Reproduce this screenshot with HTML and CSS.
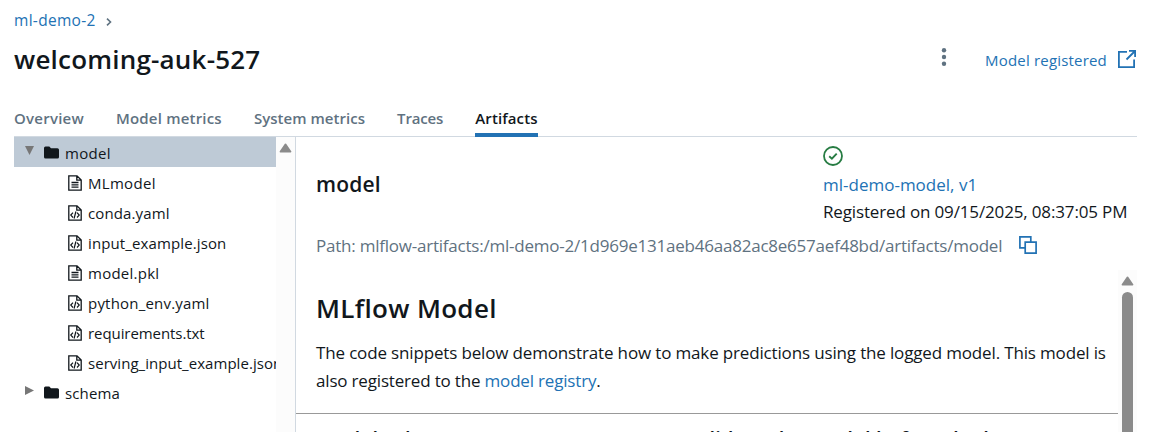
FILE: index.html
```html
<!DOCTYPE html>
<html lang="en">
<head>
<meta charset="utf-8">
<title>welcoming-auk-527</title>
<link rel="stylesheet" href="styles.css">
</head>
<body>
<svg class="sprite" aria-hidden="true">
  <symbol id="folder" viewBox="0 0 15 13"><path d="M0 2Q0 .5 1.5.5H5.3L7 2.3H13.4Q15 2.3 15 3.8V11Q15 12.5 13.5 12.5H1.5Q0 12.5 0 11Z" fill="currentColor"/></symbol>
  <symbol id="file" viewBox="0 0 14 16"><path d="M.8.8H9L13.2 5V15.2H.8ZM8.8.8V5.2H13.2M3.5 7.5H10.5M3.5 9.8H10.5M3.5 12.1H10.5" fill="none" stroke="currentColor" stroke-width="1.3"/></symbol>
  <symbol id="code" viewBox="0 0 14 16"><path d="M.8.8H9L13.2 5V15.2H.8ZM8.8.8V5.2H13.2" fill="none" stroke="currentColor" stroke-width="1.3"/><path d="M5 7.7L2.8 10.1L5 12.5M9 7.7L11.2 10.1L9 12.5M7.9 6.5L6.1 13.5" fill="none" stroke="currentColor" stroke-width="1.2"/></symbol>
</svg>
<div class="page">
  <nav class="crumbs"><a class="t-crumb">ml-demo-2</a><svg width="6" height="8" viewBox="0 0 6 8"><path d="M1 .6L4.5 4L1 7.4" fill="none" stroke="#5f7281" stroke-width="1.6"/></svg></nav>
  <header class="header">
    <h1 class="title">welcoming-auk-527</h1>
    <div class="actions">
      <svg class="dots" width="6" height="18" viewBox="0 0 6 18"><g fill="#5f7281"><circle cx="3" cy="2.3" r="2.2"/><circle cx="3" cy="9" r="2.2"/><circle cx="3" cy="15.7" r="2.2"/></g></svg>
      <a class="registered">Model registered</a>
      <svg class="external" width="19" height="19" viewBox="0 0 19 19"><path d="M9 1.9H.9V17.1H16.1V9.5M11 .9H17.1V7M17 1L8.5 9.5" fill="none" stroke="#2272b4" stroke-width="1.8"/></svg>
    </div>
  </header>
  <div class="tabs">
    <a class="tab overview">Overview</a><a class="tab metrics">Model metrics</a><a class="tab system">System metrics</a><a class="tab traces">Traces</a><a class="tab active">Artifacts</a>
  </div>
  <main class="main">
    <aside class="side">
      <div class="tree">
        <div class="row selected"><svg class="arrow" width="10" height="9"><path d="M0 0H9L4.5 9Z" fill="#777"/></svg><svg class="folder"><use href="#folder"/></svg><span class="n-model">model</span></div>
        <div class="row child"><svg class="icon"><use href="#file"/></svg><span class="n-ml">MLmodel</span></div>
        <div class="row child"><svg class="icon"><use href="#code"/></svg><span class="n-conda">conda.yaml</span></div>
        <div class="row child"><svg class="icon"><use href="#code"/></svg><span class="n-input">input_example.json</span></div>
        <div class="row child"><svg class="icon"><use href="#file"/></svg><span class="n-pkl">model.pkl</span></div>
        <div class="row child"><svg class="icon"><use href="#code"/></svg><span class="n-env">python_env.yaml</span></div>
        <div class="row child"><svg class="icon"><use href="#code"/></svg><span class="n-req">requirements.txt</span></div>
        <div class="row child"><svg class="icon"><use href="#code"/></svg><span class="n-serv">serving_input_example.json</span></div>
        <div class="row"><svg class="arrow" width="10" height="9"><path d="M0 0L9 4.5L0 9Z" fill="#777"/></svg><svg class="folder"><use href="#folder"/></svg><span class="n-schema">schema</span></div>
      </div>
      <div class="scroll"><svg width="13" height="10" viewBox="0 0 13 10"><path d="M6.5 1.3L11.6 8.7H1.4Z" fill="#8b8b8b" stroke="#8b8b8b" stroke-width="1.6" stroke-linejoin="round"/></svg></div>
    </aside>
    <section class="detail">
      <div class="info">
        <h2 class="name">model</h2>
        <div class="version">
          <svg width="20" height="20" viewBox="0 0 20 20"><circle cx="10" cy="10" r="9" fill="none" stroke="#277c43" stroke-width="1.8"/><path d="M6.2 10.2L8.9 12.6L13.7 7.6" fill="none" stroke="#277c43" stroke-width="1.9"/></svg>
          <a class="v-link">ml-demo-model, v1</a>
          <span class="v-date">Registered on 09/15/2025, 08:37:05 PM</span>
        </div>
      </div>
      <div class="pathrow"><span class="path">Path: mlflow-artifacts:/ml-demo-2/1d969e131aeb46aa82ac8e657aef48bd/artifacts/model</span><svg width="18" height="18" viewBox="0 0 18 18"><path d="M5.5 11.8H.9V.9H11.8V5.5M6.2 6.2H17.1V17.1H6.2Z" fill="none" stroke="#2272b4" stroke-width="1.7"/></svg></div>
      <div class="viewer">
        <div class="content">
          <h2 class="mlflow">MLflow Model</h2>
          <p class="copy"><span class="c1">The code snippets below demonstrate how to make predictions using the logged model. This model is</span><br><span class="c2">also registered to the <a>model registry</a>.</span></p>
          <div class="columns"><h3 class="col-a">Model schema</h3><h3 class="col-b">Validate the model before deployment</h3></div>
        </div>
        <div class="scroll"><svg width="13" height="10" viewBox="0 0 13 10"><path d="M6.5 1.3L11.6 8.7H1.4Z" fill="#8b8b8b" stroke="#8b8b8b" stroke-width="1.6" stroke-linejoin="round"/></svg><div class="thumb"></div></div>
      </div>
    </section>
  </main>
</div>
</body>
</html>
```
FILE: styles.css
```css
* { box-sizing: border-box; }
body { margin: 0; width: 1150px; height: 432px; overflow: hidden; background: #fff; color: #11171c; font-family: "Open Sans", "Noto Sans", sans-serif; }
h1, h2, h3, p { margin: 0; font-weight: 600; }
span, a, h1, h2, h3 { white-space: nowrap; }
a { color: #2272b4; }
svg { flex: none; }
.sprite { position: absolute; width: 0; height: 0; }
.page { height: 432px; padding: 0 13px 0 14px; display: flex; flex-direction: column; }
.crumbs { height: 40px; display: flex; align-items: center; gap: 10px; font-size: 15.5px; letter-spacing: .3px; }
.crumbs svg { margin-top: 3px; }
.header { height: 40px; display: flex; justify-content: space-between; align-items: center; }
.title { font-size: 26px; letter-spacing: .2px; padding-bottom: 3px; }
.actions { display: flex; align-items: center; font-size: 15px; letter-spacing: .19px; }
.dots { margin: -6px 38px 0 0; }
.external { margin: -1px 0 0 11px; }
.tabs { height: 57px; flex: none; border-bottom: 1px solid #d1d9e1; display: flex; align-items: flex-end; gap: 32px; font-size: 15px; font-weight: 600; }
.tab { color: #5f7281; height: 33px; line-height: 28px; border-bottom: 4px solid transparent; margin-bottom: -1px; }
.tab.active { color: #11171c; border-color: #2272b4; letter-spacing: .12px; }
.overview { letter-spacing: .24px; }
.metrics { letter-spacing: .2px; }
.system { letter-spacing: .04px; }
.traces { letter-spacing: -.15px; }
.main { flex: 1; min-height: 0; display: flex; }
.side { width: 282px; flex: none; display: flex; border-right: 1px solid #d1d9e1; }
.tree { width: 262px; overflow: hidden; font-size: 15px; }
.row { height: 30px; padding: 1px 0 0 10px; display: flex; align-items: center; }
.selected { background: #becad6; }
.arrow { margin: -5px 9px 0 1px; }
.folder { width: 15px; height: 13px; margin-right: 6px; }
.child { padding-left: 54px; }
.icon { width: 14px; height: 16px; margin-right: 6px; }
.n-model, .n-ml { letter-spacing: .3px; }
.n-conda, .n-input, .n-schema { letter-spacing: .12px; }
.n-serv { letter-spacing: .04px; }
.n-pkl { letter-spacing: .25px; }
.n-env { letter-spacing: .2px; }
.n-req { letter-spacing: -.07px; }
.scroll { width: 19px; background: #fcfcfc; display: flex; flex-direction: column; align-items: center; padding-top: 6px; flex: none; }
.detail { flex: 1; min-width: 0; display: flex; flex-direction: column; }
.info { display: flex; justify-content: space-between; padding: 9px 10px 0 20px; height: 92px; }
.name { font-size: 21px; line-height: 28px; padding-top: 24px; letter-spacing: .2px; }
.version { width: 304px; display: flex; flex-direction: column; font-size: 17px; line-height: 27px; }
.version svg { margin: 0 0 5px; }
.v-date { letter-spacing: -.15px; }
.pathrow { height: 41px; padding: 0 0 9px 20px; display: flex; align-items: center; gap: 17px; color: #5f7281; font-size: 17px; }
.path { letter-spacing: -.225px; }
.viewer { flex: 1; min-height: 0; display: flex; overflow: hidden; }
.content { flex: 1; min-width: 0; }
.mlflow { font-size: 26px; line-height: 36px; padding: 20px 0 1px 20px; letter-spacing: .33px; }
.copy { font-size: 17px; line-height: 28px; font-weight: 400; padding: 12px 0 17px 20px; border-bottom: 1px solid #999; height: 87px; }
.c1 { letter-spacing: -.155px; }
.c2 { letter-spacing: -.18px; }
.columns { display: grid; grid-template-columns: 369px 1fr; padding: 11px 0 0 20px; line-height: 28px; }
.columns h3 { font-size: 20px; }
.col-a { letter-spacing: .5px; }
.col-b { letter-spacing: .2px; }
.thumb { width: 11px; height: 200px; flex: none; background: #8b8b8b; border-radius: 6px; margin-top: 6px; }
```
